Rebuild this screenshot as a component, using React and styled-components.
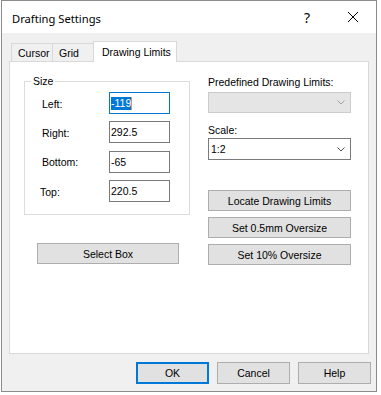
import React from "react";
import styled, { createGlobalStyle } from "styled-components";

const GlobalStyle = createGlobalStyle`
  html, body {
    margin: 0;
    padding: 0;
    background: #ffffff;
  }
  body {
    font-family: "Liberation Sans", Arial, sans-serif;
  }
`;

const Window = styled.div`
  margin-left: 1px;
  width: 376px;
  height: 392px;
  box-sizing: border-box;
  border: 1px solid #8c8c8c;
  background: #f0f0f0;
  display: flex;
  flex-direction: column;
  font-family: "Liberation Sans", Arial, sans-serif;
  font-size: 10.5px;
  color: #000;
`;

const TitleBar = styled.div`
  height: 32px;
  background: #ffffff;
  display: flex;
  align-items: center;
`;

const Title = styled.div`
  flex: 1;
  padding: 2px 0 0 10px;
  font-family: "Noto Sans", "Open Sans", sans-serif;
  font-size: 11.2px;
  color: #000;
`;

const CaptionButton = styled.div`
  width: 46px;
  height: 32px;
  display: flex;
  align-items: center;
  justify-content: center;
  font-family: "Noto Sans", sans-serif;
  font-size: 14px;
  color: #000;
`;

const Body = styled.div`
  flex: 1;
  padding: 8px 7px 0 7px;
  display: flex;
  flex-direction: column;
`;

const TabStrip = styled.div`
  display: flex;
  align-items: flex-end;
  height: 20px;
  padding-left: 2px;
`;

const Tab = styled.div`
  position: relative;
  z-index: ${(p) => (p.$active ? 2 : 1)};
  box-sizing: border-box;
  width: ${(p) => p.$w}px;
  height: ${(p) => (p.$active ? 21 : 18)}px;
  margin-left: ${(p) => (p.$first ? 0 : -1)}px;
  margin-bottom: ${(p) => (p.$active ? -1 : 0)}px;
  padding-left: ${(p) => (p.$active ? 8 : 6)}px;
  border: 1px solid #d9d9d9;
  border-bottom: none;
  background: ${(p) => (p.$active ? "#ffffff" : "#f0f0f0")};
  display: flex;
  align-items: center;
  white-space: nowrap;
`;

const Panel = styled.div`
  box-sizing: border-box;
  height: 293px;
  background: #ffffff;
  border: 1px solid #d9d9d9;
  display: flex;
  padding: 13px 0 0 14px;
`;

const LeftColumn = styled.div`
  width: 166px;
  display: flex;
  flex-direction: column;
`;

const GroupBox = styled.fieldset`
  box-sizing: border-box;
  width: 166px;
  margin: 0;
  padding: 4px 0 12px 17px;
  border: 1px solid #dcdcdc;
  display: grid;
  grid-template-columns: 67px 61px;
  row-gap: 7.4px;
  align-items: center;
`;

const Legend = styled.legend`
  margin-left: -11px;
  padding: 0 2px;
  line-height: 13px;
`;

const FieldLabel = styled.div`
  margin-left: ${(p) => p.$shift || 0}px;
  padding-top: 1px;
`;

const TextBox = styled.div`
  box-sizing: border-box;
  height: 22px;
  border: 1px solid ${(p) => (p.$focused ? "#0078d7" : "#7a7a7a")};
  background: #ffffff;
  padding-left: 1px;
  display: flex;
  align-items: center;
`;

const Selected = styled.span`
  background: #0078d7;
  color: #ffffff;
  line-height: 13px;
`;

const Caret = styled.span`
  width: 1px;
  height: 13px;
  background: #f08a5d;
`;

const RightColumn = styled.div`
  width: 143px;
  margin-left: 18px;
  padding-top: 1px;
  display: flex;
  flex-direction: column;
`;

const Label = styled.div`
  line-height: 13px;
  margin-top: ${(p) => p.$top || 0}px;
`;

const Combo = styled.div`
  box-sizing: border-box;
  height: ${(p) => p.$h}px;
  margin-top: ${(p) => p.$top}px;
  border: 1px solid ${(p) => (p.$disabled ? "#cccccc" : "#7a7a7a")};
  background: ${(p) => (p.$disabled ? "#e5e5e5" : "#ffffff")};
  display: flex;
  align-items: center;
  justify-content: space-between;
  padding: 0 5px 0 2px;
`;

const Button = styled.div`
  box-sizing: border-box;
  width: ${(p) => p.$w}px;
  height: ${(p) => p.$h || 21}px;
  margin-top: ${(p) => p.$top || 0}px;
  margin-left: ${(p) => p.$left || 0}px;
  background: #e1e1e1;
  border: ${(p) => (p.$default ? "2px solid #0078d7" : "1px solid #adadad")};
  display: flex;
  align-items: center;
  justify-content: center;
  white-space: nowrap;
`;

const ButtonRow = styled.div`
  display: flex;
  justify-content: flex-end;
  gap: 8px;
  margin: 8px -2px 0 0;
`;

const Chevron = ({ color }) => (
  <svg width="8" height="5" viewBox="0 0 8 5">
    <polyline points="0.5,0.5 4,4 7.5,0.5" fill="none" stroke={color} strokeWidth="1" />
  </svg>
);

const CloseIcon = () => (
  <svg width="10" height="10" viewBox="0 0 10 10">
    <path d="M0 0 L10 10 M10 0 L0 10" stroke="#000" strokeWidth="1" />
  </svg>
);

export default function App() {
  return (
    <>
      <GlobalStyle />
      <Window>
        <TitleBar>
          <Title>Drafting Settings</Title>
          <CaptionButton>?</CaptionButton>
          <CaptionButton>
            <CloseIcon />
          </CaptionButton>
        </TitleBar>
        <Body>
          <TabStrip>
            <Tab $first $w={42}>Cursor</Tab>
            <Tab $w={42}>Grid</Tab>
            <Tab $active $w={84}>Drawing Limits</Tab>
          </TabStrip>
          <Panel>
            <LeftColumn>
              <GroupBox>
                <Legend>Size</Legend>
                <FieldLabel>Left:</FieldLabel>
                <TextBox $focused>
                  <Selected>-119</Selected>
                  <Caret />
                </TextBox>
                <FieldLabel>Right:</FieldLabel>
                <TextBox>292.5</TextBox>
                <FieldLabel>Bottom:</FieldLabel>
                <TextBox>-65</TextBox>
                <FieldLabel $shift={-2}>Top:</FieldLabel>
                <TextBox>220.5</TextBox>
              </GroupBox>
              <Button $w={142} $top={28} $left={13}>Select Box</Button>
            </LeftColumn>
            <RightColumn>
              <Label>Predefined Drawing Limits:</Label>
              <Combo $disabled $h={21} $top={3}>
                <span />
                <Chevron color="#a0a0a0" />
              </Combo>
              <Label $top={11}>Scale:</Label>
              <Combo $h={22} $top={1}>
                <span>1:2</span>
                <Chevron color="#555555" />
              </Combo>
              <Button $w={143} $top={30}>Locate Drawing Limits</Button>
              <Button $w={143} $top={6}>Set 0.5mm Oversize</Button>
              <Button $w={143} $top={6}>Set 10% Oversize</Button>
            </RightColumn>
          </Panel>
          <ButtonRow>
            <Button $default $w={73} $h={22}>OK</Button>
            <Button $w={73} $h={22}>Cancel</Button>
            <Button $w={73} $h={22}>Help</Button>
          </ButtonRow>
        </Body>
      </Window>
    </>
  );
}
